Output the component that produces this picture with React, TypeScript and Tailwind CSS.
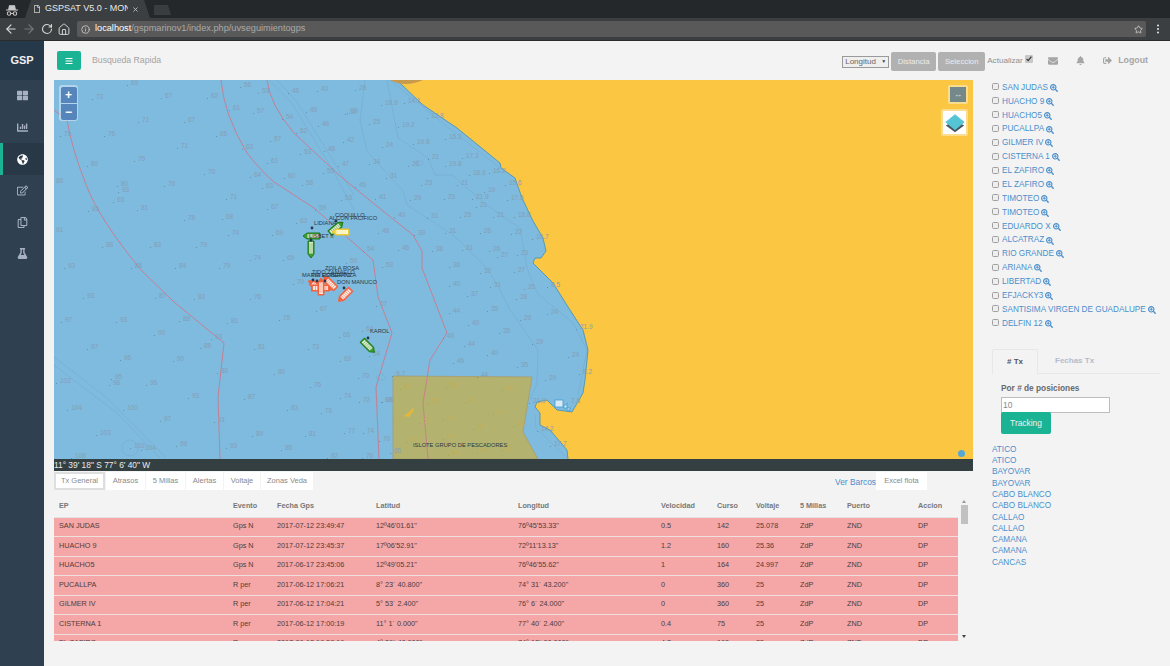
import { ArrowLeft, ArrowRight, Home, Info, MoreVertical, RotateCw, Star, X } from 'lucide-react';
import {
  FaBars,
  FaBell,
  FaChartBar,
  FaEnvelope,
  FaFlask,
  FaGlobeAmericas,
  FaRegCopy,
  FaRegEdit,
  FaRegFile,
  FaSearchPlus,
  FaSignOutAlt,
  FaThLarge,
} from 'react-icons/fa';

const barcos = [
  'SAN JUDAS', 'HUACHO 9', 'HUACHO5', 'PUCALLPA', 'GILMER IV', 'CISTERNA 1', 'EL ZAFIRO', 'EL ZAFIRO', 'TIMOTEO',
  'TIMOTEO', 'EDUARDO X', 'ALCATRAZ', 'RIO GRANDE', 'ARIANA', 'LIBERTAD', 'EFJACKY3', 'SANTISIMA VIRGEN DE GUADALUPE', 'DELFIN 12',
];

const puertos = [
  'ATICO', 'ATICO', 'BAYOVAR', 'BAYOVAR', 'CABO BLANCO', 'CABO BLANCO', 'CALLAO', 'CALLAO', 'CAMANA', 'CAMANA', 'CANCAS',
];

const filas = [
  ['SAN JUDAS', 'Gps N', '2017-07-12 23:49:47', '12º46\'01.61"', '76º45\'53.33"', '0.5', '142', '25.078'],
  ['HUACHO 9', 'Gps N', '2017-07-12 23:45:37', '17º06\'52.91"', '72º11\'13.13"', '1.2', '160', '25.36'],
  ['HUACHO5', 'Gps N', '2017-06-17 23:45:06', '12º49\'05.21"', '76º46\'55.62"', '1', '164', '24.997'],
  ['PUCALLPA', 'R per', '2017-06-12 17:06:21', '8° 23´ 40.800"', '74° 31´ 43.200"', '0', '360', '25'],
  ['GILMER IV', 'R per', '2017-06-12 17:04:21', '5° 53´ 2.400"', '76° 6´ 24.000"', '0', '360', '25'],
  ['CISTERNA 1', 'R per', '2017-06-12 17:00:19', '11° 1´ 0.000"', '77° 40´ 2.400"', '0.4', '75', '25'],
  ['EL ZAFIRO', 'R per', '2017-06-12 16:58:19', '4° 36´ 48.000"', '74° 12´ 00.000"', '4.2', '160', '25'],
];

const sondas: [number, number, string][] = [
  [127, 85, '69'], [92, 99, '73'], [161, 98, '67'], [207, 98, '62'], [240, 87, '56'], [258, 93, '53'], [288, 93, '48'], [317, 91, '43'],
  [138, 122, '71'], [184, 122, '67'], [229, 110, '61'], [253, 113, '57'], [282, 119, '54'], [306, 112, '46'], [347, 113, '39'],
  [60, 136, '79'], [104, 136, '76'], [216, 136, '66'], [296, 133, '52'], [318, 126, '48'], [270, 141, '57'], [343, 142, '42'],
  [177, 148, '71'], [242, 149, '63'], [324, 151, '48'], [300, 154, '53'], [87, 166, '80'], [134, 161, '76'], [267, 163, '61'], [338, 166, '47'],
  [204, 174, '70'], [250, 177, '64'], [284, 178, '60'], [323, 173, '55'], [117, 186, '80'], [164, 186, '76'], [262, 188, '63'], [302, 185, '58'],
  [118, 192, '93'], [226, 199, '71'], [341, 200, '53'], [113, 202, '93'], [88, 211, '85'], [137, 210, '81'], [267, 209, '67'], [315, 210, '59'],
  [184, 220, '78'], [222, 219, '68'], [296, 223, '63'], [228, 235, '74'], [272, 235, '69'], [102, 247, '88'], [150, 247, '83'], [196, 247, '79'],
  [250, 260, '74'], [283, 260, '69'], [52, 232, '91'], [52, 183, '86'], [64, 268, '93'], [131, 268, '88'], [175, 268, '84'], [219, 268, '79'],
  [83, 298, '93'], [155, 298, '87'], [194, 299, '83'], [250, 299, '76'], [293, 284, '70'], [316, 311, '67'], [279, 320, '75'], [61, 322, '97'],
  [116, 322, '93'], [179, 321, '88'], [227, 323, '81'], [339, 337, '66'], [362, 331, '64'], [154, 335, '90'], [211, 339, '93'], [87, 349, '97'],
  [200, 348, '88'], [254, 349, '81'], [308, 349, '73'], [120, 360, '96'], [173, 361, '90'], [340, 361, '69'], [369, 356, '54'], [217, 373, '86'],
  [274, 374, '80'], [358, 378, '70'], [376, 306, '67'], [56, 383, '102'], [111, 379, '95'], [109, 385, '98'], [146, 385, '96'], [310, 387, '76'],
  [188, 398, '93'], [244, 399, '87'], [340, 398, '74'], [359, 402, '72'], [381, 402, '68'], [67, 410, '104'], [123, 410, '100'], [287, 410, '83'],
  [321, 413, '76'], [160, 421, '97'], [214, 422, '91'], [96, 435, '103'], [252, 436, '89'], [305, 436, '81'], [344, 433, '77'], [363, 433, '74'],
  [379, 441, '70'], [176, 446, '99'], [226, 448, '93'], [281, 450, '85'], [130, 448, '102'], [141, 450, '104'], [71, 458, '108'], [327, 458, '82'], [362, 458, '76'],
  [355, 90, '28'], [381, 105, '18.9'], [404, 103, '14.1'], [345, 114, '39'], [427, 118, '12.8'], [369, 124, '25'], [398, 127, '19.2'],
  [445, 139, '15.2'], [413, 144, '19.8'], [382, 147, '24'], [462, 158, '17.3'], [369, 164, '34'], [408, 166, '28'], [428, 159, '21'], [445, 166, '19.8'],
  [469, 175, '18.3'], [489, 173, '16.2'], [386, 178, '31'], [505, 185, '15.6'], [421, 185, '23'], [457, 185, '21'], [355, 187, '46'], [484, 192, '19'],
  [375, 199, '41'], [410, 200, '29'], [444, 199, '23'], [472, 199, '21.9'], [507, 200, '17.5'], [476, 207, '21'], [394, 217, '40'], [427, 218, '31'],
  [460, 217, '25'], [493, 217, '21'], [514, 217, '18.8'], [378, 233, '48'], [414, 235, '39'], [445, 233, '31'], [480, 233, '26'], [511, 234, '22'],
  [532, 239, '16.7'], [363, 251, '54'], [398, 250, '46'], [432, 251, '38'], [462, 250, '31'], [489, 251, '26'], [497, 257, '27'], [517, 255, '23'],
  [346, 263, '59'], [382, 267, '53'], [449, 267, '38'], [480, 273, '32'], [514, 272, '27'], [449, 286, '40'], [490, 287, '31'], [524, 289, '26'],
  [547, 287, '8.5'], [467, 296, '37'], [516, 299, '28'], [449, 313, '44'], [487, 311, '35'], [547, 314, '24'], [520, 320, '29'], [468, 325, '40'],
  [576, 329, '21.9'], [499, 333, '35'], [443, 338, '46'], [532, 344, '29'], [464, 346, '44'], [487, 355, '40'], [568, 357, '24'], [453, 363, '46'],
  [517, 367, '35'], [579, 374, '8.2'], [477, 377, '44'], [545, 380, '29'], [567, 403, '7.8'], [529, 403, '21.9'], [537, 431, '14.2'], [550, 446, '17.7'],
  [392, 376, '9.7'], [382, 402, '68'], [390, 453, '65'],
];

const sondasOliva: [number, number, string][] = [
  [400, 389, '61'], [446, 387, '53'], [502, 390, '40'], [465, 402, '46'], [428, 403, '55'], [493, 414, '42'], [513, 426, '36'], [443, 420, '50'],
  [419, 423, '57'], [393, 420, '64'], [473, 429, '48'], [407, 442, '62'], [443, 439, '57'], [448, 455, '54'], [477, 453, '50'], [502, 450, '53'],
];

const etiquetas: [number, number, string][] = [
  [335, 217, 'COQUILLO'], [329, 220, 'ALCON PACIFICO'], [314, 225, 'LIDIANA'], [309, 238, 'LISBET II'],
  [325, 270, 'ZOILA ROSA'], [312, 274, 'TIDO ZAMAELO'], [302, 277, 'MARIA ESPERANZA'], [311, 277, 'TIO ROBERTO'],
  [337, 284, 'DON MANUCO'], [370, 333, 'KAROL'], [413, 447, 'ISLOTE GRUPO DE PESCADORES'],
];

const puntos = [
  [312, 228], [311, 240], [336, 221], [344, 288], [368, 338], [313, 280], [317, 281], [325, 281],
];

const menu = [FaThLarge, FaChartBar, FaGlobeAmericas, FaRegEdit, FaRegCopy, FaFlask];

function Barco({ x, y, giro, borde, fondo, franja, escala = 1 }: { x: number; y: number; giro: number; borde: string; fondo: string; franja: string; escala?: number }) {
  return (
    <g transform={`translate(${x} ${y}) rotate(${giro}) scale(${escala} 1)`}>
      <path d="M-8 -3 L5 -3 L9 0 L5 3 L-8 3 Z" fill={fondo} stroke={borde} strokeWidth="1" strokeLinejoin="round" />
      <rect x="-7" y="-2" width="11.5" height="4" fill={franja} />
      {[-5, -3, -1, 1, 3].map((s) => (
        <line key={s} x1={s} y1="-2" x2={s} y2="2" stroke={fondo} strokeWidth="0.5" />
      ))}
    </g>
  );
}

function Mapa() {
  return (
    <svg viewBox="54 80 919 379" className="block h-[379px] w-[919px]">
      <rect x="54" y="80" width="919" height="379" fill="#7fbadf" />
      <path
        d="M396 80 L402 85 L423 105 L457 128 L473 141 L500 163 L501 168 L515 178 L522 198 L533 221 L543 238 L546 251 L541 258 L535 258 L533 263 L540 270 L553 283 L570 310 L583 330 L588 350 L585 380 L583 393 L572 412 L557 410 L547 400 L537 402 L535 407 L540 413 L540 425 L550 430 L567 450 L568 459 L973 459 L973 80 Z"
        fill="#fbc742"
      />
      <path
        d="M396 80 L402 85 L423 105 L457 128 L473 141 L500 163 L501 168 L515 178 L522 198 L533 221 L543 238 L546 251 L541 258 L535 258 L533 263 L540 270 L553 283 L570 310 L583 330 L588 350 L585 380 L583 393 L572 412 L557 410 L547 400 L537 402 L535 407 L540 413 L540 425 L550 430 L567 450 L568 459"
        fill="none"
        stroke="#3f8fb8"
        strokeWidth="0.8"
      />
      <path d="M390 80 Q405 88 423 80 Z" fill="#c79a4e" />
      <polygon points="393,376 532,377 523,432 538,459 393,459" fill="#b3b36f" stroke="#a99b6c" strokeWidth="0.8" />
      <path d="M404 416 L410 411 L414 407 L413 412 L409 417 Z" fill="#e0b83e" />
      <g fill="none" stroke="#73add0" strokeWidth="0.6">
        <path d="M269 80 L291 102 L331 167 L354 210" />
        <path d="M277 80 L297 102 L340 172 L354 195" />
        <path d="M54 357 L107 398 L166 458" />
        <path d="M54 365 L117 413 L160 458" />
        <path d="M365 80 L360 121 L367 151 L403 191 L407 205 L453 235 L487 268 L500 290 L510 310 L538 350 L537 383 L530 400" />
        <path d="M387 80 L398 138 L428 158 L435 175 L452 175 L488 206 L520 228 L527 268 L537 293 L573 323 L587 350 L578 395" />
        <path d="M390 80 L440 121 L500 168" />
        <path d="M535 415 L536 428 L568 459" />
        <circle cx="130" cy="448" r="8" />
        <ellipse cx="419" cy="163" rx="4" ry="2.5" />
        <path d="M376 378 Q382 370 386 378 Q382 382 376 378" />
      </g>
      <g fill="none" stroke="#c97a8c" strokeWidth="0.9">
        <path d="M54 110 L67 120 Q72 150 87 187 Q100 220 141 270 L174 302 L224 343 L218 397 L220 459" />
        <path d="M221 80 Q224 115 247 153 Q262 172 274 182 L314 208 L373 260 L378 297 L392 333 L376 387 L379 459" />
        <path d="M267 80 Q270 105 294 133 L340 176 L373 203 L413 235 L422 251 L422 268 L447 333 L430 360 L423 403 L428 459" />
      </g>
      <g fill="#dbeaf4" stroke="#3f9fd0" strokeWidth="0.8">
        <rect x="555" y="400" width="8" height="7" />
        <rect x="564" y="405" width="3" height="3" />
        <rect x="567" y="408" width="3" height="2" />
      </g>
      <g className="text-[6.5px]">
        {sondas.map(([x, y, t], i) => (
          <g key={i}>
            <rect x={x} y={y} width="0.8" height="0.8" fill="#5a7a92" />
            <text x={x + 4} y={y} fill="#83a0b5">{t}</text>
          </g>
        ))}
        {sondasOliva.map(([x, y, t], i) => (
          <g key={i}>
            <rect x={x} y={y} width="0.8" height="0.8" fill="#a8983f" />
            <text x={x + 4} y={y} fill="#c2ae58">{t}</text>
          </g>
        ))}
      </g>
      <Barco x={336} y={228} giro={-40} borde="#1f7a1c" fondo="#3c9e2e" franja="#dfe8d2" />
      <Barco x={341} y={232} giro={180} borde="#e3c12f" fondo="#f5d94a" franja="#fffdf0" />
      <Barco x={312} y={236} giro={180} borde="#1f7a1c" fondo="#3c9e2e" franja="#dfe8d2" />
      <Barco x={311} y={249} giro={90} borde="#1f7a1c" fondo="#3c9e2e" franja="#dfe8d2" />
      <Barco x={368} y={346} giro={45} borde="#1f7a1c" fondo="#3c9e2e" franja="#dfe8d2" />
      <Barco x={316} y={286} giro={215} borde="#f4623f" fondo="#f4623f" franja="#ffe9e0" />
      <Barco x={322} y={288} giro={0} borde="#f4623f" fondo="#f4623f" franja="#ffe9e0" escala={1.3} />
      <Barco x={321} y={287} giro={270} borde="#f4623f" fondo="#f4623f" franja="#ffe9e0" />
      <Barco x={330} y={283} giro={225} borde="#f4623f" fondo="#f4623f" franja="#ffe9e0" />
      <Barco x={345} y={295} giro={135} borde="#f4623f" fondo="#f4623f" franja="#ffe9e0" />
      {puntos.map(([x, y], i) => (
        <circle key={i} cx={x} cy={y} r="1.4" fill="#26384a" />
      ))}
      <g className="text-[5.75px]" fill="#2d3a44">
        {etiquetas.map(([x, y, t]) => (
          <text key={t} x={x} y={y}>{t}</text>
        ))}
      </g>
    </svg>
  );
}

function Navegador() {
  return (
    <div className="h-[41px] shrink-0">
      <div className="flex h-[18px] items-end bg-[#24282a]">
        <svg viewBox="0 0 18 14" className="ml-[4px] mb-[2px] h-[12px] w-[16px]" fill="none" stroke="#c9c9c9" strokeWidth="1.2">
          <path d="M2 7 H16 M5 7 L6 2 H12 L13 7" fill="#c9c9c9" />
          <circle cx="5.5" cy="11" r="2" />
          <circle cx="12.5" cy="11" r="2" />
          <path d="M7.5 11 H10.5" />
        </svg>
        <div className="ml-[5px] flex h-[18px] w-[125px] items-center pl-[8px] text-[9px] text-[#e8e8e8] bg-[#3c3f41] [clip-path:polygon(6px_0,119px_0,125px_100%,0_100%)]">
          <FaRegFile className="mr-[4px] h-[8px] w-[8px] shrink-0 text-[#d0d0d0]" />
          <span className="w-[83px] overflow-hidden whitespace-nowrap">GSPSAT V5.0 - MONITOREO</span>
          <X className="ml-[4px] h-[7px] w-[7px] text-[#c5c5c5]" strokeWidth={3} />
        </div>
        <div className="mb-[3px] ml-[1px] h-[10px] w-[20px] bg-[#3a3d3f] [clip-path:polygon(3px_0,17px_0,20px_100%,3px_100%)]" />
      </div>
      <div className="flex h-[23px] items-center border-b border-[#2a2c2e] bg-[#3c3f41] pl-[4px] pr-[6px] text-[#d8d8d8]">
        <ArrowLeft className="h-[14px] w-[14px]" strokeWidth={2} />
        <ArrowRight className="ml-[4px] h-[14px] w-[14px] text-[#777]" strokeWidth={2} />
        <RotateCw className="ml-[4px] h-[12px] w-[14px]" strokeWidth={2.2} />
        <Home className="ml-[3px] h-[13px] w-[14px]" strokeWidth={1.8} />
        <div className="ml-[6px] flex h-[16px] flex-1 items-center rounded-[2px] bg-[#595959] pl-[4px] pr-[3px] text-[9.2px]">
          <Info className="mr-[5px] h-[9px] w-[9px]" strokeWidth={2} />
          <span className="text-white">localhost</span>
          <span className="text-[#a9a9a9]">/gspmarinov1/index.php/uvseguimientogps</span>
          <Star className="ml-auto h-[9px] w-[9px]" strokeWidth={2} />
        </div>
        <MoreVertical className="ml-[6px] h-[12px] w-[12px]" strokeWidth={2.4} />
      </div>
    </div>
  );
}

function Lateral() {
  return (
    <aside className="w-[44px] shrink-0 bg-[#2f4050]">
      <div className="flex h-[39px] items-center justify-center bg-[#25394b] text-[11px] font-bold text-[#f0f0f0]">GSP</div>
      {menu.map((Icono, i) => (
        <div
          key={i}
          className={
            i === 2
              ? 'flex h-[32px] items-center justify-center border-l-[3px] border-[#1ab394] bg-[#293846] pr-[3px] text-white'
              : 'flex h-[31.5px] items-center justify-center text-[#a7b1c2]'
          }
        >
          <Icono className="h-[11px] w-[11px]" />
        </div>
      ))}
    </aside>
  );
}

function Cabecera() {
  return (
    <header className="flex h-[39px] shrink-0 items-center pl-[13px] pr-[22px] text-[#a3a3a3]">
      <button className="flex h-[19px] w-[24px] items-center justify-center rounded-[2px] bg-[#1ab394] text-white">
        <FaBars className="h-[8px] w-[8px]" />
      </button>
      <span className="ml-[11px] text-[8.7px]">Busqueda Rapida</span>
      <div className="ml-auto mt-[2px] flex h-[12px] w-[47px] items-center justify-between border border-[#9a9a9a] bg-[#efefef] px-[2px] text-[8px] text-[#666]">
        <span>Longitud</span>
        <span className="text-[5px] text-[#444]">▼</span>
      </div>
      <button className="ml-[2px] mt-[2px] h-[19px] w-[45px] rounded-[2px] bg-[#b1b1b1] text-[7.75px] text-[#ececec]">Distancia</button>
      <button className="ml-[2px] mt-[2px] h-[19px] w-[47px] rounded-[2px] bg-[#b1b1b1] text-[7.75px] text-[#ececec]">Seleccion</button>
      <span className="ml-[2px] mt-[2px] w-[36px] whitespace-nowrap text-[8.1px] text-[#8f8f8f]">Actualizar</span>
      <input type="checkbox" defaultChecked className="ml-[2px] mb-[3px] h-[8px] w-[8px] accent-[#c9c9c9]" />
      <FaEnvelope className="ml-[15px] h-[10px] w-[10px] text-[#a6a6a6]" />
      <FaBell className="ml-[18px] h-[9px] w-[9px] text-[#a6a6a6]" />
      <FaSignOutAlt className="ml-[18px] h-[9px] w-[9px] text-[#a6a6a6]" />
      <span className="ml-[6px] text-[8.8px] font-bold text-[#a6a6a6]">Logout</span>
    </header>
  );
}

function Tabla() {
  const cabeceras = ['EP', 'Evento', 'Fecha Gps', 'Latitud', 'Longitud', 'Velocidad', 'Curso', 'Voltaje', '5 Millas', 'Puerto', 'Accion'];
  return (
    <div className="mt-[6px] flex h-[145px] overflow-hidden">
      <div className="h-[145px] w-[904px] overflow-hidden">
        <table className="w-[904px] table-fixed text-[7.25px]">
          <colgroup>
            <col className="w-[174px]" />
            <col className="w-[44px]" />
            <col className="w-[99px]" />
            <col className="w-[142px]" />
            <col className="w-[143px]" />
            <col className="w-[56px]" />
            <col className="w-[39px]" />
            <col className="w-[44px]" />
            <col className="w-[47px]" />
            <col className="w-[71px]" />
            <col className="w-[45px]" />
          </colgroup>
          <thead>
            <tr className="h-[21px] border-b border-[#e4e4e4]">
              {cabeceras.map((c) => (
                <th key={c} className="pl-[5px] text-left font-semibold text-[#777]">{c}</th>
              ))}
            </tr>
          </thead>
          <tbody>
            {filas.map((f) => (
              <tr key={f[0] + f[2]} className="h-[19.5px] border-b border-[#efdfdf] bg-[#f5a6a6] text-[#503c3c]">
                {f.map((v, i) => (
                  <td key={i} className="overflow-hidden whitespace-nowrap pl-[5px]">{v}</td>
                ))}
                <td className="pl-[5px]">ZdP</td>
                <td className="pl-[5px]">ZND</td>
                <td className="pl-[5px]">DP</td>
              </tr>
            ))}
          </tbody>
        </table>
      </div>
      <div className="ml-[2px] flex w-[8px] flex-col items-center text-[#555]">
        <span className="mt-[4px] h-0 w-0 border-x-[2.5px] border-b-[3px] border-x-transparent border-b-[#999]" />
        <span className="mt-[2px] h-[19px] w-[7px] bg-[#c1c1c1]" />
        <span className="mt-auto mb-[3px] h-0 w-0 border-x-[2.5px] border-t-[3px] border-x-transparent border-t-[#444]" />
      </div>
    </div>
  );
}

function Pestanas() {
  const items = ['Atrasos', '5 Millas', 'Alertas', 'Voltaje', 'Zonas Veda'];
  const anchos = ['w-[39px]', 'w-[39px]', 'w-[37px]', 'w-[36px]', 'w-[52px]'];
  return (
    <div className="mt-px flex h-[18px] items-stretch text-[7.5px] text-[#8a8a8a]">
      <span className="flex w-[51px] items-center justify-center border-2 border-[#dedede] bg-white">Tx General</span>
      {items.map((t, i) => (
        <span key={t} className={`ml-px flex items-center justify-center bg-white ${anchos[i]}`}>{t}</span>
      ))}
      <a className="ml-auto mt-[2px] flex items-center text-[8.4px] text-[#4a8fcb]">Ver Barcos</a>
      <span className="mr-[46px] flex w-[51px] items-center justify-center bg-white">Excel flota</span>
    </div>
  );
}

function Derecha() {
  return (
    <aside className="flex-1 pl-[19px] text-[8.2px] text-[#4a8fcb]">
      <ul className="pt-[1px]">
        {barcos.map((b, i) => (
          <li key={i} className="flex h-[13.88px] items-center whitespace-nowrap">
            <input type="checkbox" className="mb-[2px] mr-[3px] h-[7px] w-[7px] appearance-none rounded-[1.5px] border border-[#a0a0a0] bg-[#eeeeee]" />
            <span>{b}</span>
            <FaSearchPlus className="ml-[2px] h-[8px] w-[8px]" />
          </li>
        ))}
      </ul>
      <div className="mt-[18px] mr-[10px] flex h-[25px] border-b border-[#e7e7e7] text-[8px] font-bold">
        <span className="flex h-[25px] w-[46px] items-center justify-center rounded-t-[2px] border border-b-0 border-[#e7e7e7] bg-[#f3f3f4] text-[#555]">
          # Tx
        </span>
        <span className="ml-[17px] flex items-center text-[#b4bccb]">Fechas Tx</span>
      </div>
      <div className="pl-[9px]">
        <p className="mt-[9px] h-[11px] text-[8.3px] font-bold leading-[11px] text-[#676a6c]">Por # de posiciones</p>
        <input
          readOnly
          value="10"
          className="mt-[3.5px] block h-[16px] w-[109px] border border-[#bdbdbd] bg-white pl-[1px] text-[8.5px] text-[#888]"
        />
        <button className="mt-[-1px] block h-[22px] w-[50px] rounded-[2px] bg-[#1ab394] text-[8.4px] text-[#f2f2f2]">Tracking</button>
      </div>
      <ul className="mt-[9.5px]">
        {puertos.map((p, i) => (
          <li key={i} className="h-[11.3px] leading-[11.3px]">{p}</li>
        ))}
      </ul>
    </aside>
  );
}

export default function App() {
  return (
    <div className="flex h-screen w-screen flex-col overflow-hidden bg-[#f3f3f4] font-['Liberation_Sans',sans-serif]">
      <Navegador />
      <div className="flex min-h-0 flex-1">
        <Lateral />
        <main className="flex min-w-0 flex-1 flex-col">
          <Cabecera />
          <div className="flex min-h-0 flex-1">
            <section className="ml-[10px] w-[919px] shrink-0">
              <div className="relative">
                <Mapa />
                <div className="absolute left-[5px] top-[5px] rounded-[3px] bg-white/40 p-[1.5px]">
                  <button className="flex h-[16px] w-[16px] items-center justify-center rounded-t-[2px] bg-[#5585ba] text-[12px] font-bold leading-none text-white">+</button>
                  <button className="mt-px flex h-[16px] w-[16px] items-center justify-center rounded-b-[2px] bg-[#5585ba] text-[12px] font-bold leading-none text-white">−</button>
                </div>
                <div className="absolute right-[5px] top-[5px] rounded-[2px] bg-white/40 p-[2px]">
                  <div className="flex h-[15px] w-[16px] items-center justify-center bg-[#76898a] text-[8px] text-[#e5e5e5]">↔</div>
                </div>
                <div className="absolute right-[5px] top-[29px] rounded-[2px] bg-white/40 p-[2px]">
                  <div className="flex h-[23px] w-[23px] items-center justify-center bg-white">
                    <svg viewBox="0 0 24 24" className="h-[20px] w-[20px]">
                      <path d="M12 9 L23 15 L12 23 L1 15 Z" fill="#4a5560" strokeLinejoin="round" />
                      <path d="M12 2 L23 11 L12 20 L1 11 Z" fill="#55c5d5" stroke="#55c5d5" strokeLinejoin="round" />
                    </svg>
                  </div>
                </div>
                <span className="absolute bottom-[2px] right-[8px] h-[7px] w-[7px] rounded-full bg-[#55a7d6]" />
              </div>
              <div className="flex h-[12px] items-center bg-[#343f41] text-[8.4px] leading-none text-[#ececec]">11° 39' 18" S 77° 6' 40" W</div>
              <Pestanas />
              <Tabla />
            </section>
            <Derecha />
          </div>
        </main>
      </div>
    </div>
  );
}
